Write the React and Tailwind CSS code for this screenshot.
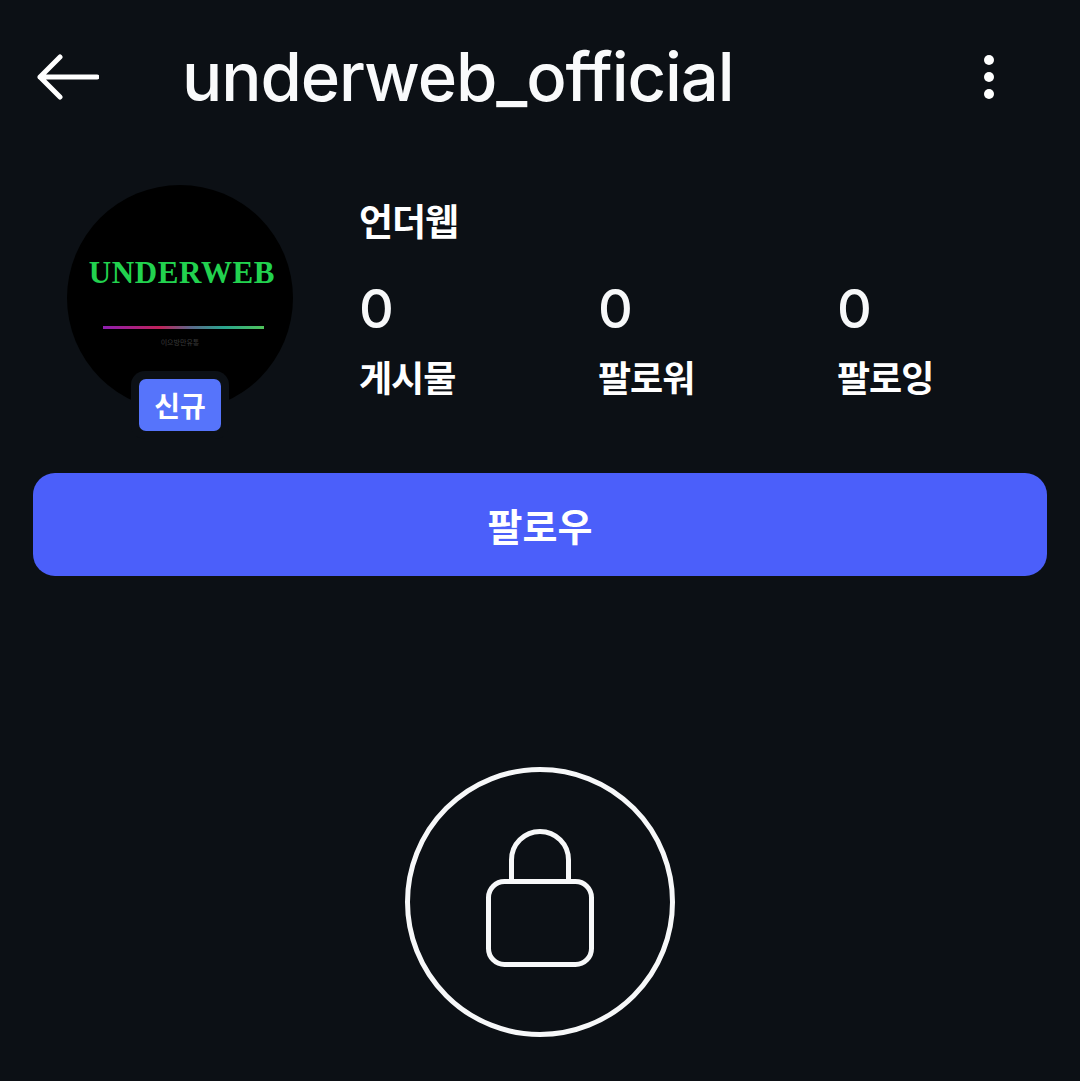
import React from "react";

const korean = "font-['Noto_Sans_CJK_KR',sans-serif] font-bold text-white";

function Stat({ label }) {
  return (
    <div className="w-[239px]">
      <p className="font-['Inter',sans-serif] text-[54px] leading-[60px] font-medium text-[#f7f8f9]">0</p>
      <p className={`${korean} mt-[14px] text-[36px] leading-[46px] tracking-[-1px]`}>{label}</p>
    </div>
  );
}

function Avatar() {
  return (
    <div className="relative h-[226px] w-[226px] shrink-0">
      <div className="flex h-[226px] w-[226px] flex-col items-center rounded-full bg-black">
        <p className="mt-[70px] ml-[4px] font-['Liberation_Serif',serif] text-[31px] leading-[36px] font-bold tracking-[0.6px] text-[#22d24f]">
          UNDERWEB
        </p>
        <div className="mt-[35px] ml-[7px] h-[3px] w-[161px] bg-[linear-gradient(90deg,#8e1fb0,#c0235a_35%,#5b6a8c_55%,#2aa58f_75%,#4fc35a)]" />
        <p className="mt-[8px] font-['Noto_Sans_CJK_KR',sans-serif] text-[7px] leading-[10px] font-normal text-[#3a3a3a]">이으방만유통</p>
      </div>
      <div className="absolute top-[186px] left-[64px] rounded-[14px] bg-[#0c1015] p-[8px]">
        <div className={`${korean} flex h-[52px] w-[82px] items-center justify-center rounded-[7px] bg-[#5674fb] text-[28px] leading-none`}>
          신규
        </div>
      </div>
    </div>
  );
}

export default function App() {
  return (
    <div className="h-[1081px] w-[1080px] overflow-hidden bg-[#0c1015]">
      <header className="flex h-[155px] items-center pb-[2px]">
        <svg className="ml-[37px] h-[48px] w-[62px]" viewBox="0 0 62 48" fill="none" stroke="#fff" strokeWidth="5" strokeLinecap="round" strokeLinejoin="round">
          <path d="M60 24H3M23 4 3 24l20 20" />
        </svg>
        <h1 className="ml-[83px] font-['Inter',sans-serif] text-[67px] leading-[72px] font-medium tracking-[-1.1px] text-[#f9fafb]">
          underweb_official
        </h1>
        <div className="mr-[86px] ml-auto flex flex-col gap-[7px]">
          <span className="h-[10px] w-[10px] rounded-full bg-white" />
          <span className="h-[10px] w-[10px] rounded-full bg-white" />
          <span className="h-[10px] w-[10px] rounded-full bg-white" />
        </div>
      </header>

      <section className="mt-[30px] flex pl-[67px]">
        <Avatar />
        <div className="ml-[66px]">
          <p className={`${korean} mt-[10px] text-[37px] leading-[50px] tracking-[-1px]`}>언더웹</p>
          <div className="mt-[34px] flex">
            <Stat label="게시물" />
            <Stat label="팔로워" />
            <Stat label="팔로잉" />
          </div>
        </div>
      </section>

      <button className={`${korean} mx-[33px] mt-[62px] block h-[103px] w-[1014px] rounded-[22px] bg-[#4b5ffa] text-[38px]`}>
        팔로우
      </button>

      <div className="mx-auto mt-[191px] flex h-[270px] w-[270px] items-center justify-center rounded-full border-[5px] border-[#f7f8f9]">
        <svg className="h-[146px] w-[110px]" viewBox="0 0 110 146" fill="none" stroke="#f7f8f9" strokeWidth="5">
          <path d="M26.5 52V31a28.5 28.5 0 0 1 57 0v21" />
          <rect x="3.5" y="52.5" width="103" height="83" rx="16" />
        </svg>
      </div>
    </div>
  );
}
